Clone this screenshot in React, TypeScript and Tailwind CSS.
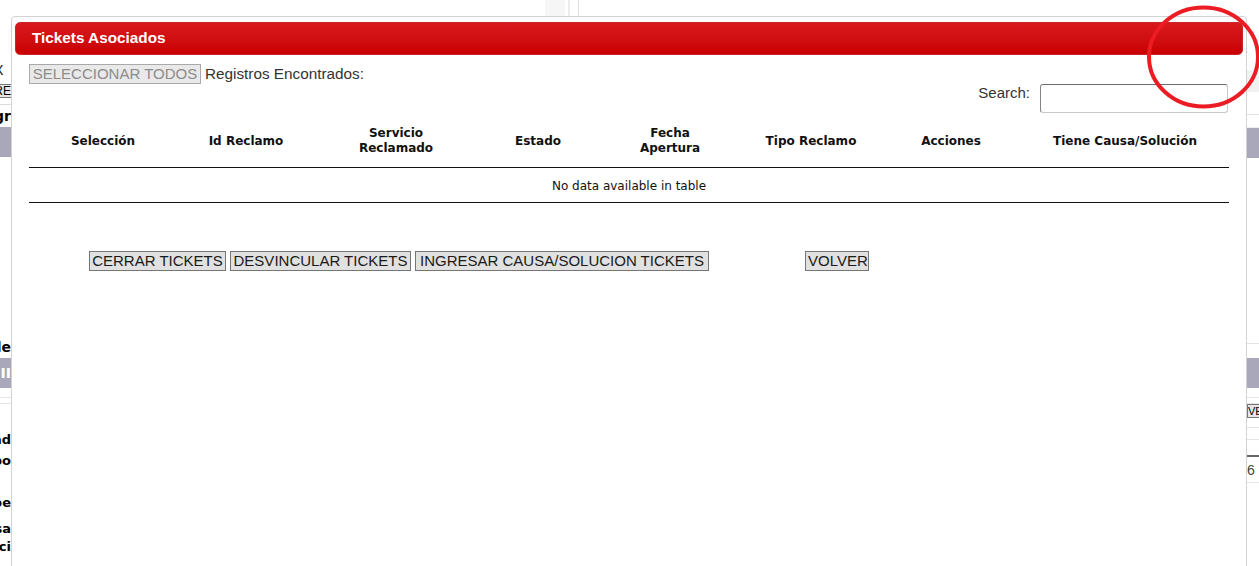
import React from 'react'

const columns = [
  { w: 'w-[148px]', lines: ['Selección'] },
  { w: 'w-[138px]', lines: ['Id Reclamo'] },
  { w: 'w-[162px]', lines: ['Servicio', 'Reclamado'] },
  { w: 'w-[122px]', lines: ['Estado'] },
  { w: 'w-[142px]', lines: ['Fecha', 'Apertura'] },
  { w: 'w-[140px]', lines: ['Tipo Reclamo'] },
  { w: 'w-[140px]', lines: ['Acciones'] },
  { w: 'w-[208px]', lines: ['Tiene Causa/Solución'] },
]

const btn =
  'h-[20px] px-[2px] border border-[#767676] bg-[#e1e1e1] text-[15px] leading-[18px] text-[#1a1a1a] whitespace-nowrap text-center'

export default function App() {
  return (
    <div className="relative w-[1259px] h-[566px] overflow-hidden bg-white font-['Liberation_Sans',Arial,sans-serif]">
      {/* page behind the dialog */}
      <div className="flex h-full">
        {/* left strip */}
        <div className="w-[11px] flex flex-col font-['DejaVu_Sans',Verdana,sans-serif] text-black">
          <div className="h-[62px]" />
          <div className="h-[16px] flex overflow-hidden text-[14px] leading-[16px] text-[#222]">
            <span className="-ml-[6px]">X</span>
          </div>
          <div className="h-[6px]" />
          <div className="h-[14px] flex justify-end overflow-hidden border-y border-[#777] bg-[#e6e6e6] font-['Liberation_Sans',Arial,sans-serif] text-[12px] leading-[12px]">
            RE
          </div>
          <div className="h-[7px] border-b border-[#ddd]" />
          <div className="h-[22px] flex justify-end items-center overflow-hidden font-bold text-[14px]">Ingr</div>
          <div className="h-[30px] bg-[#a8a8ba]" />
          <div className="h-[183px]" />
          <div className="h-[14px] flex justify-end items-center overflow-hidden font-bold text-[14px]">Detalle</div>
          <div className="h-[4px]" />
          <div className="h-[30px] bg-[#a8a8ba] flex justify-end items-center overflow-hidden text-[14px] text-white font-bold">II</div>
          <div className="h-[10px] border-b border-[#e5e5e5]" />
          <div className="h-[6px] border-b border-[#e5e5e5]" />
          <div className="h-[22px]" />
          <div className="h-[28px] flex justify-end items-center overflow-hidden font-bold text-[13px]">Cantidad</div>
          <div className="h-[32px] flex justify-end items-center overflow-hidden font-bold text-[13px]">Tiempo Clie</div>
          <div className="h-[34px] flex justify-end items-center overflow-hidden font-bold text-[13px]">Tipe</div>
          <div className="flex flex-col items-end overflow-hidden font-bold text-[13px] leading-[18px]">
            <span>Causa</span>
            <span>Soluci</span>
          </div>
        </div>

        {/* middle */}
        <div className="flex-1">
          <div className="flex h-[16px]">
            <div className="w-[534px]" />
            <div className="w-[20px] bg-[#f6f6f6]" />
            <div className="w-[3px]" />
            <div className="w-[2px] bg-[#ececec]" />
            <div className="w-[8px]" />
            <div className="w-[1px] bg-[#e0e0e0]" />
          </div>
        </div>

        {/* right strip */}
        <div className="w-[12px] flex flex-col font-['DejaVu_Sans',Verdana,sans-serif]">
          <div className="h-[70px]" />
          <div className="h-[22px] bg-[#f1f1f1]" />
          <div className="h-[23px] border-b border-[#e3e3e3]" />
          <div className="h-[13px] border-b border-[#eeeeee]" />
          <div className="h-[30px] bg-[#a8a8ba]" />
          <div className="h-[186px] border-b border-[#e3e3e3]" />
          <div className="h-[14px]" />
          <div className="h-[30px] bg-[#a8a8ba]" />
          <div className="h-[10px] border-b border-[#e5e5e5]" />
          <div className="h-[6px] border-b border-[#e5e5e5]" />
          <div className="h-[14px] border border-r-0 border-[#777] bg-[#e6e6e6] overflow-hidden font-['Liberation_Sans',Arial,sans-serif] text-[11px] leading-[12px] whitespace-nowrap">
            VE
          </div>
          <div className="h-[10px] border-b border-[#e5e5e5]" />
          <div className="h-[12px] border-b border-[#e5e5e5]" />
          <div className="h-[17px] border-b-2 border-[#666]" />
          <div className="h-[26px] border-b border-[#e5e5e5] font-['Liberation_Sans',Arial,sans-serif] text-[14px] leading-[26px] text-[#444]">
            6
          </div>
        </div>
      </div>

      {/* dialog */}
      <div className="absolute left-[11px] top-[16px] w-[1236px] h-[560px] bg-white border border-[#d3d3d3] rounded-t-[4px] pt-[5px] px-[3px]">
        <div className="h-[33px] flex items-center pl-[16px] rounded-[5px] border border-[#c9262a] bg-gradient-to-b from-[#d8191d] to-[#c90000]">
          <span className="text-white font-bold text-[15.3px]">Tickets Asociados</span>
        </div>

        <div className="px-[14px]">
          <div className="mt-[9px] flex items-center h-[20px]">
            <button disabled className="w-[172px] h-[20px] px-[2px] border border-[#a9a9a9] bg-[#e9e9e9] text-[15px] leading-[18px] text-[#8c8c8c] whitespace-nowrap">
              SELECCIONAR TODOS
            </button>
            <span className="ml-[4px] text-[15.3px] text-[#333]">Registros Encontrados:</span>
          </div>

          <div className="flex justify-end items-start mr-[1px] mb-[7px]">
            <label className="text-[15px] leading-[17px] text-[#333] mr-[10px]">Search:</label>
            <input
              type="text"
              className="w-[188px] h-[29px] rounded-[3px] border border-t-[#6e6e6e] border-l-[#858585] border-r-[#c9c9c9] border-b-[#c9c9c9] bg-white"
            />
          </div>

          <div className="font-['DejaVu_Sans',Verdana,sans-serif]">
            <div className="flex pt-[6px] pb-[11px] border-b border-[#111]">
              {columns.map((c, i) => (
                <div key={i} className={`${c.w} flex flex-col items-center justify-center text-[12px] leading-[15px] font-bold text-[#111] text-center`}>
                  {c.lines.map((l, j) => (
                    <span key={j}>{l}</span>
                  ))}
                </div>
              ))}
            </div>
            <div className="h-[35px] pt-[2px] flex items-center justify-center border-b border-[#111] text-[12px] text-[#111]">
              No data available in table
            </div>
          </div>

          <div className="mt-[48px] ml-[60px] flex items-center">
            <button className={`${btn} w-[137px]`}>CERRAR TICKETS</button>
            <button className={`${btn} w-[181px] ml-[4px]`}>DESVINCULAR TICKETS</button>
            <button className={`${btn} w-[294px] ml-[4px]`}>INGRESAR CAUSA/SOLUCION TICKETS</button>
            <button className={`${btn} w-[64px] ml-[96px]`}>VOLVER</button>
          </div>
        </div>
      </div>

      {/* red annotation circle */}
      <svg className="absolute left-[1146px] top-[5px]" width="115" height="105" viewBox="0 0 115 105">
        <ellipse cx="57.5" cy="52" rx="54.5" ry="49.5" fill="none" stroke="#ec1c24" strokeWidth="4" />
      </svg>
    </div>
  )
}
